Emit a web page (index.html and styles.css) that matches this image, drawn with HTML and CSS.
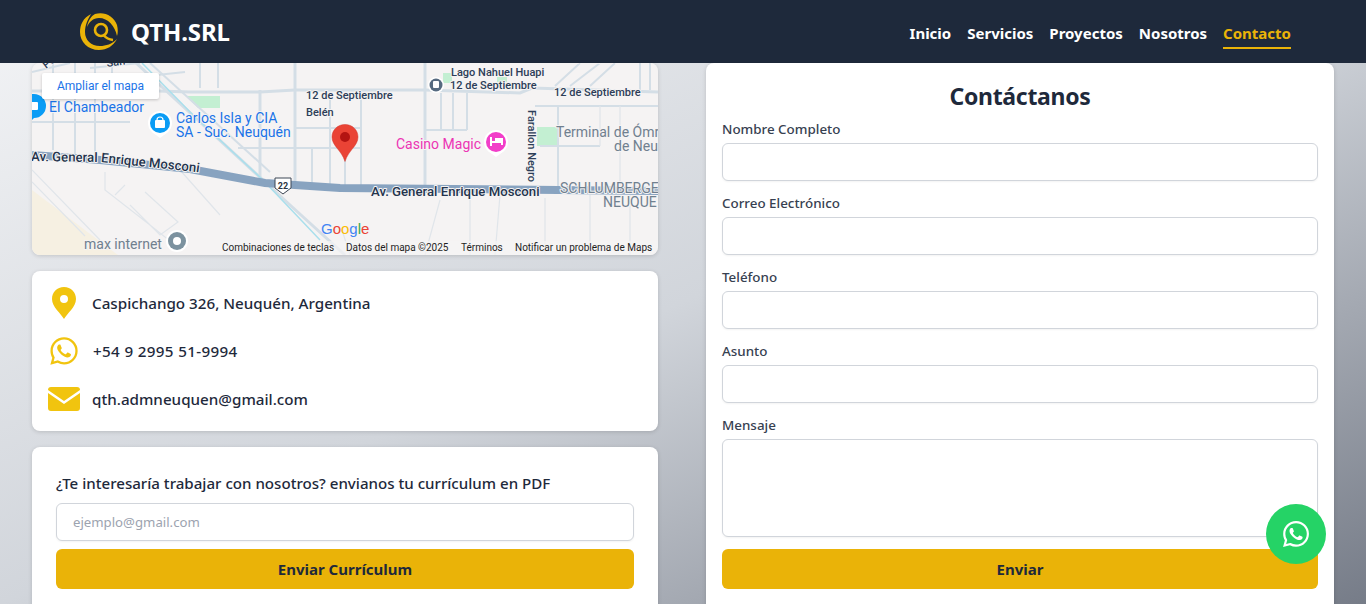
FILE: index.html
```html
<!DOCTYPE html>
<html lang="es">
<head>
    <meta charset="UTF-8">
    <meta name="viewport" content="width=device-width, initial-scale=1.0">
    <title>QTH.SRL - Contacto</title>
    <link rel="stylesheet" href="styles.css">
</head>
<body>
    <header class="topbar">
        <a class="brand" href="#">
            <svg class="brand-logo" viewBox="0 0 38 38">
                <path class="logo-fill" d="M11 2C3 6 0 13 0 20c0 10 8 18 19 18 8 0 14-4 18-11-5 5-11 7-17 7-9 0-15-6-15-14 0-7 3-13 6-18z"/>
                <path class="logo-fill" d="M15 2c9-3 19 2 22 11 1 4 1 8 0 11-2-10-9-18-18-18-6 0-10 4-12 9 1-6 4-11 8-13z"/>
                <circle class="logo-line" cx="21" cy="18" r="6"/>
                <path class="logo-line" d="M24 23.500C26 26 29 27.500 33 28"/>
            </svg>
            <span class="brand-name">QTH.SRL</span>
        </a>
        <nav class="menu">
            <a href="#">Inicio</a>
            <a href="#">Servicios</a>
            <a href="#">Proyectos</a>
            <a href="#">Nosotros</a>
            <a class="active" href="#">Contacto</a>
        </nav>
    </header>

    <main class="layout">
        <div class="left-col">
            <div class="map">
                <svg class="map-svg" viewBox="32 63 626 192">
                    <rect class="m-bg" x="32" y="63" width="626" height="192"/>
                    <polygon class="m-sand" points="32,190 118,255 32,255"/>
                    <polygon class="m-park" points="186,96 220,96 220,108 198,108"/>
                    <rect class="m-park" x="537" y="127" width="20" height="19"/>
                    <rect class="m-park" x="443" y="73" width="9" height="10"/>
                    <rect class="m-park" x="497" y="77" width="10" height="5"/>

                    <!-- calles -->
                    <path class="m-road" d="M32 91H158L190 92H260L295 90H425L520 93L532 88L658 92"/>
                    <path class="m-road" d="M295 63V188M425 63V188M260 90V178"/>
                    <path class="m-road thin" d="M312 148V188M330 92V188M345 148V188M361 92V188"/>
                    <path class="m-road thin" d="M295 128H361M238 148H361"/>
                    <path class="m-road thin" d="M441 93V130M453 93V130M467 93V130M425 130H467"/>
                    <path class="m-road thin" d="M535 106H658M558 106V188M540 146H600"/>
                    <path class="m-road thin" d="M555 86L580 63M570 86L600 63M590 86L615 63M640 63V90M650 63V90"/>
                    <path class="m-road thin" d="M53 63V150M75 63V155M95 63V160M32 122H130M112 63V90M90 68L140 63"/>
                    <path class="m-road thin" d="M32 72L70 63M110 80L185 72M200 63V88M218 63V88"/>
                    <path class="m-road" d="M136 63L290 205L345 255"/>
                    <path class="m-road thin" d="M150 63L270 172"/>
                    <path class="m-water" d="M142 63L193 115L263 180L320 240"/>
                    <path class="m-faint" d="M32 170L100 240M32 182L85 236M105 172V190L150 225L175 245M115 195L125 185M130 205L160 235L178 222L145 192M180 170L220 215M470 200V255M545 198V255M590 195V255M630 195V255M500 195L495 255M440 200L425 255M342 230L350 255M600 106V146M620 106V188"/>

                    <!-- avenida -->
                    <path class="m-avenue" d="M32 155L100 160L190 169L265 183L340 188L658 191"/>
                    <path id="av-curve" class="m-none" d="M31 161L100 162L195 172L225 176"/>
                    <text class="m-label"><textPath href="#av-curve">Av. General Enrique Mosconi</textPath></text>
                    <text class="m-label" x="371" y="196">Av. General Enrique Mosconi</text>

                    <path class="m-shield" d="M275 178H291V188L283 194L275 188Z"/>
                    <text class="m-shield-num" x="283" y="189">22</text>

                    <!-- etiquetas -->
                    <text class="m-small" x="306" y="99">12 de Septiembre</text>
                    <text class="m-small" x="306" y="116">Belén</text>
                    <text class="m-small" x="451" y="76">Lago Nahuel Huapi</text>
                    <text class="m-small" x="450" y="89">12 de Septiembre</text>
                    <text class="m-small" x="554" y="96">12 de Septiembre</text>
                    <text class="m-small" x="46" y="69" transform="rotate(-38 46 69)">Pe</text>
                    <text class="m-small" x="107" y="67" transform="rotate(-8 107 67)">San</text>
                    <text class="m-small" x="573" y="63">San Martín</text>
                    <text class="m-small" x="528" y="110" transform="rotate(90 528 110)">Farallon Negro</text>
                    <text class="m-poi blue" x="49" y="112">El Chambeador</text>
                    <text class="m-poi blue" x="176" y="123">Carlos Isla y CIA</text>
                    <text class="m-poi blue" x="176" y="137">SA - Suc. Neuquén</text>
                    <text class="m-poi pink" x="396" y="149">Casino Magic</text>
                    <text class="m-poi gray" x="556" y="137">Terminal de Ómr</text>
                    <text class="m-poi gray" x="614" y="151">de Neu</text>
                    <text class="m-poi gray" x="560" y="193">SCHLUMBERGE</text>
                    <text class="m-poi gray" x="603" y="207">NEUQUE</text>
                    <text class="m-poi gray" x="84" y="249">max internet</text>

                    <!-- marcadores -->
                    <path class="m-pin-blue" d="M34 94a12 12 0 0 1 0 24l-4 4-4-4V94z"/>
                    <rect class="m-bag" x="30" y="102" width="8" height="8" rx="1"/>
                    <circle class="m-halo" cx="160" cy="123" r="12"/>
                    <path class="m-halo" d="M152 132L160 138L168 132Z"/>
                    <circle class="m-pin-blue" cx="160" cy="123" r="10"/>
                    <rect class="m-bag" x="155" y="120" width="10" height="8" rx="1"/>
                    <path class="m-bag-handle" d="M157 120a3 3 0 0 1 6 0"/>
                    <circle class="m-halo" cx="496" cy="142" r="12"/>
                    <path class="m-halo" d="M488 151L496 157L504 151Z"/>
                    <circle class="m-pin-pink" cx="496" cy="142" r="10"/>
                    <path class="m-bed" d="M490 137H492V141H495V138H503V145H501V143H492V146H490Z"/>
                    <circle class="m-halo" cx="436" cy="85" r="8"/>
                    <circle class="m-pin-slate" cx="436" cy="85" r="6.5"/>
                    <rect class="m-bag" x="433" y="81" width="6" height="7" rx="1"/>
                    <circle class="m-halo" cx="177" cy="241" r="11"/>
                    <circle class="m-pin-gray" cx="177" cy="241" r="9"/>
                    <circle class="m-bag" cx="177" cy="241" r="4"/>

                    <path class="m-marker" d="M345 124.500c-7.500 0-13 5.500-13 12.500 0 9 9.500 13 13 24.500 3.500-11.500 13-15.500 13-24.500 0-7-5.500-12.500-13-12.500z"/>
                    <circle class="m-marker-dot" cx="345" cy="137" r="5"/>

                    <text class="m-google" x="321" y="234"><tspan class="g-blue">G</tspan><tspan class="g-red">o</tspan><tspan class="g-yellow">o</tspan><tspan class="g-blue">g</tspan><tspan class="g-green">l</tspan><tspan class="g-red">e</tspan></text>

                    <rect class="m-strip" x="220" y="241" width="438" height="14"/>
                    <text class="m-foot" x="222" y="251">Combinaciones de teclas</text>
                    <text class="m-foot" x="346" y="251">Datos del mapa ©2025</text>
                    <text class="m-foot" x="461" y="251">Términos</text>
                    <text class="m-foot" x="515" y="251">Notificar un problema de Maps</text>
                </svg>
                <a class="map-link" href="#">Ampliar el mapa</a>
            </div>

            <section class="card info">
                <div class="info-row">
                    <svg class="info-icon" viewBox="0 0 32 32"><path class="icon-fill" d="M16 0C9 0 4 5.300 4 12c0 8 9 14.500 12 20 3-5.500 12-12 12-20C28 5.300 23 0 16 0zm0 16a4 4 0 1 1 0-8 4 4 0 0 1 0 8z"/></svg>
                    <span>Caspichango 326, Neuquén, Argentina</span>
                </div>
                <div class="info-row">
                    <svg class="info-icon" viewBox="-2 -2 28 28"><path class="icon-fill" d="M17.472 14.382c-.297-.149-1.758-.867-2.03-.967-.273-.099-.471-.148-.67.15-.197.297-.767.966-.94 1.164-.173.199-.347.223-.644.075-.297-.15-1.255-.463-2.39-1.475-.883-.788-1.48-1.761-1.653-2.059-.173-.297-.018-.458.13-.606.134-.133.298-.347.446-.52.149-.174.198-.298.298-.497.099-.198.05-.371-.025-.52-.075-.149-.669-1.612-.916-2.207-.242-.579-.487-.5-.669-.51-.173-.008-.371-.01-.57-.01-.198 0-.52.074-.792.372-.272.297-1.04 1.016-1.04 2.479 0 1.462 1.065 2.875 1.213 3.074.149.198 2.096 3.2 5.077 4.487.709.306 1.262.489 1.694.625.712.227 1.36.195 1.871.118.571-.085 1.758-.719 2.006-1.413.248-.694.248-1.289.173-1.413-.074-.124-.272-.198-.57-.347m-5.421 7.403h-.004a9.87 9.87 0 0 1-5.031-1.378l-.361-.214-3.741.982.998-3.648-.235-.374a9.86 9.86 0 0 1-1.51-5.26c.001-5.45 4.436-9.884 9.888-9.884 2.64 0 5.122 1.03 6.988 2.898a9.825 9.825 0 0 1 2.893 6.994c-.003 5.45-4.437 9.884-9.885 9.884m8.413-18.297A11.815 11.815 0 0 0 12.05 0C5.495 0 .16 5.335.157 11.892c0 2.096.547 4.142 1.588 5.945L.057 24l6.305-1.654a11.882 11.882 0 0 0 5.683 1.448h.005c6.554 0 11.89-5.335 11.893-11.893a11.821 11.821 0 0 0-3.48-8.413z"/></svg>
                    <span class="phone">+54 9 2995 51-9994</span>
                </div>
                <div class="info-row">
                    <svg class="info-icon" viewBox="0 0 32 32"><path class="icon-fill" d="M3 4H29a3 3 0 0 1 3 3L16 18 0 7A3 3 0 0 1 3 4zM0 10L16 21 32 10V25a3 3 0 0 1-3 3H3a3 3 0 0 1-3-3z"/></svg>
                    <span>qth.admneuquen@gmail.com</span>
                </div>
            </section>

            <section class="card cv">
                <p class="cv-title">¿Te interesaría trabajar con nosotros? envianos tu currículum en PDF</p>
                <input class="field cv-field" type="email" placeholder="ejemplo@gmail.com">
                <button class="btn" type="button">Enviar Currículum</button>
            </section>
        </div>

        <section class="card contact">
            <h2>Contáctanos</h2>
            <form class="contact-form">
                <label>Nombre Completo</label>
                <input class="field" type="text">
                <label>Correo Electrónico</label>
                <input class="field" type="email">
                <label>Teléfono</label>
                <input class="field" type="tel">
                <label>Asunto</label>
                <input class="field" type="text">
                <label>Mensaje</label>
                <textarea class="field message"></textarea>
                <button class="btn" type="button">Enviar</button>
            </form>
        </section>
    </main>

    <a class="wa-float" href="#">
        <svg viewBox="0 0 24 24"><path d="M17.472 14.382c-.297-.149-1.758-.867-2.03-.967-.273-.099-.471-.148-.67.15-.197.297-.767.966-.94 1.164-.173.199-.347.223-.644.075-.297-.15-1.255-.463-2.39-1.475-.883-.788-1.48-1.761-1.653-2.059-.173-.297-.018-.458.13-.606.134-.133.298-.347.446-.52.149-.174.198-.298.298-.497.099-.198.05-.371-.025-.52-.075-.149-.669-1.612-.916-2.207-.242-.579-.487-.5-.669-.51-.173-.008-.371-.01-.57-.01-.198 0-.52.074-.792.372-.272.297-1.04 1.016-1.04 2.479 0 1.462 1.065 2.875 1.213 3.074.149.198 2.096 3.2 5.077 4.487.709.306 1.262.489 1.694.625.712.227 1.36.195 1.871.118.571-.085 1.758-.719 2.006-1.413.248-.694.248-1.289.173-1.413-.074-.124-.272-.198-.57-.347m-5.421 7.403h-.004a9.87 9.87 0 0 1-5.031-1.378l-.361-.214-3.741.982.998-3.648-.235-.374a9.86 9.86 0 0 1-1.51-5.26c.001-5.45 4.436-9.884 9.888-9.884 2.64 0 5.122 1.03 6.988 2.898a9.825 9.825 0 0 1 2.893 6.994c-.003 5.45-4.437 9.884-9.885 9.884m8.413-18.297A11.815 11.815 0 0 0 12.05 0C5.495 0 .16 5.335.157 11.892c0 2.096.547 4.142 1.588 5.945L.057 24l6.305-1.654a11.882 11.882 0 0 0 5.683 1.448h.005c6.554 0 11.89-5.335 11.893-11.893a11.821 11.821 0 0 0-3.48-8.413z"/></svg>
    </a>
</body>
</html>
```

FILE: styles.css
```css
* {
    box-sizing: border-box;
}
html, body {
    margin: 0;
    height: 604px;
    overflow: hidden;
}
body {
    font-family: "Noto Sans", "Open Sans", sans-serif;
    color: #1e293b;
    background: linear-gradient(to bottom right, #f3f4f6 0%, #d1d5db 50%, #767c88 100%);
    display: flex;
    flex-direction: column;
}
.topbar {
    flex: 0 0 63px;
    background-color: #1e293b;
    display: flex;
    align-items: center;
    justify-content: space-between;
    padding: 0 75px 0 80px;
}
.brand {
    display: flex;
    align-items: center;
    gap: 13px;
    text-decoration: none;
}
.brand-logo {
    width: 38px;
    height: 38px;
    margin-top: -1px;
}
.logo-fill {
    fill: #eab308;
}
.logo-line {
    fill: none;
    stroke: #eab308;
    stroke-width: 2.6;
}
.brand-name {
    color: white;
    font-size: 24px;
    font-weight: 700;
    letter-spacing: -0.1px;
}
.menu {
    display: flex;
    gap: 16px;
}
.menu a {
    color: white;
    font-size: 15px;
    font-weight: 700;
    text-decoration: none;
    padding: 8px 0 4px;
    border-bottom: 2px solid transparent;
}
.menu a.active {
    color: #eab308;
    border-bottom-color: #eab308;
}
.layout {
    display: grid;
    grid-template-columns: 626px 628px;
    gap: 48px;
    padding: 0 32px;
}
.left-col {
    display: flex;
    flex-direction: column;
    gap: 16px;
}
.card {
    background: white;
    border-radius: 8px;
    box-shadow: 0 1px 4px rgba(0, 0, 0, 0.15);
}

/* mapa */
.map {
    position: relative;
    height: 192px;
    border-radius: 8px;
    overflow: hidden;
    box-shadow: 0 1px 4px rgba(0, 0, 0, 0.15);
}
.map-svg {
    display: block;
    width: 626px;
    height: 192px;
}
.map-link {
    position: absolute;
    left: 10px;
    top: 10px;
    width: 117px;
    height: 26px;
    line-height: 26px;
    text-align: center;
    background: white;
    color: #1a73e8;
    font-family: Roboto, sans-serif;
    font-size: 12px;
    text-decoration: none;
    border-radius: 2px;
    box-shadow: 0 1px 3px rgba(0, 0, 0, 0.2);
}
.m-bg { fill: #f5f3f3; }
.m-sand { fill: #f6f0e2; }
.m-park { fill: #c3efd2; }
.m-road { fill: none; stroke: #d4dee6; stroke-width: 3; }
.m-road.thin { stroke-width: 2; }
.m-water { fill: none; stroke: #a9dfec; stroke-width: 1.5; }
.m-faint { fill: none; stroke: #e0e5ea; stroke-width: 1.2; }
.m-avenue { fill: none; stroke: #88a3c0; stroke-width: 8; }
.m-none { fill: none; }
.m-shield { fill: white; stroke: #3c4654; stroke-width: 1; }
.m-shield-num { font: 700 9px Roboto, sans-serif; fill: #2b3442; text-anchor: middle; }
.m-label, .m-small, .m-poi {
    font-family: Roboto, sans-serif;
    paint-order: stroke;
    stroke: #f5f3f3;
    stroke-linejoin: round;
    stroke-width: 2px;
}
.m-label { font-size: 13.2px; font-weight: 500; fill: #24344d; }
.m-small { font-size: 11px; font-weight: 500; fill: #2d3e58; }
.m-poi { font-size: 14px; }
.m-poi.blue { fill: #1a73e8; }
.m-poi.pink { fill: #ec34b4; }
.m-poi.gray { fill: #70808f; }
.m-halo { fill: white; }
.m-pin-blue { fill: #0a9cf5; }
.m-pin-pink { fill: #f23ec9; }
.m-pin-slate { fill: #566a80; }
.m-pin-gray { fill: #7c929f; }
.m-bag, .m-bed { fill: white; }
.m-bag-handle { fill: none; stroke: white; stroke-width: 1.2; }
.m-marker { fill: #ea4335; stroke: #d1352a; stroke-width: .5; }
.m-marker-dot { fill: #b31412; }
.m-google { font: 400 15px "Liberation Sans", sans-serif; }
.g-blue { fill: #4285f4; }
.g-red { fill: #ea4335; }
.g-yellow { fill: #fbbc05; }
.g-green { fill: #34a853; }
.m-strip { fill: rgba(245, 243, 243, 0.7); }
.m-foot { font: 10px Roboto, sans-serif; fill: #1f1f1f; }

/* datos */
.info {
    height: 160px;
    padding: 16px;
    display: flex;
    flex-direction: column;
    gap: 16px;
}
.info-row {
    display: flex;
    align-items: center;
    gap: 12px;
    height: 32px;
    font-size: 15.2px;
    font-weight: 500;
}
.info-icon {
    width: 32px;
    height: 32px;
    flex: none;
}
.icon-fill {
    fill: #f1c40f;
}
.phone {
    margin-left: 1px;
    letter-spacing: 0.35px;
}

/* curriculum */
.cv {
    padding: 24px;
    height: 200px;
    display: flex;
    flex-direction: column;
}
.cv-title {
    margin: 0 0 8px;
    font-size: 15.1px;
    font-weight: 500;
    line-height: 24px;
}
.cv-field {
    margin-bottom: 8px;
}

/* formulario */
.field {
    display: block;
    flex: none;
    width: 100%;
    height: 38px;
    padding: 0 16px;
    background: white;
    border: 1px solid #d1d5db;
    border-radius: 6px;
    box-shadow: 0 1px 2px rgba(0, 0, 0, 0.05);
    font-family: inherit;
    font-size: 13.2px;
    color: #1e293b;
    resize: none;
}
.field::placeholder {
    color: #9ca3af;
}
.message {
    height: 98px;
    margin-bottom: 12px;
}
.btn {
    display: block;
    flex: none;
    width: 100%;
    height: 40px;
    border: none;
    border-radius: 6px;
    background-color: #eab308;
    color: #1e293b;
    font-family: inherit;
    font-size: 15px;
    font-weight: 700;
}
.contact {
    height: 640px;
    padding: 17px 16px 16px;
}
.contact h2 {
    margin: 0 0 7px;
    text-align: center;
    font-size: 23px;
    letter-spacing: -0.3px;
    line-height: 32px;
    font-weight: 700;
}
.contact-form label {
    display: block;
    font-size: 13.4px;
    font-weight: 500;
    line-height: 20px;
    color: #374151;
    margin: 12px 0 4px;
}
.contact-form label:first-child {
    margin-top: 0;
}
.wa-float {
    position: fixed;
    right: 40px;
    bottom: 40px;
    width: 60px;
    height: 60px;
    border-radius: 50%;
    background-color: #25d366;
    display: flex;
    align-items: center;
    justify-content: center;
}
.wa-float svg {
    width: 26px;
    height: 26px;
    fill: white;
}
```
